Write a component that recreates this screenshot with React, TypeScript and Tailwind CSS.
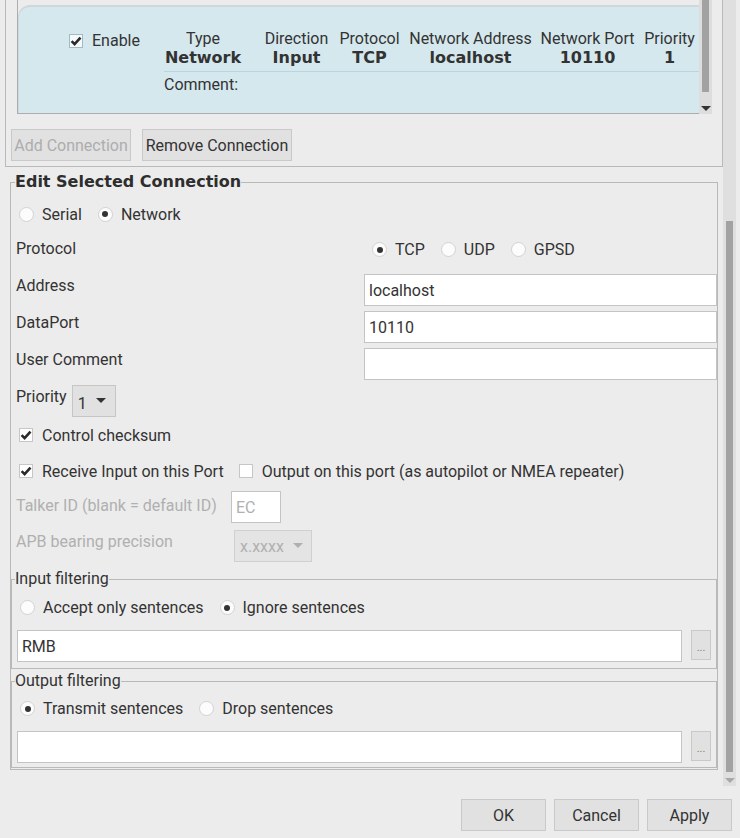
// Verbindungs-Dialog: Liste oben, Editor unten, Buttons am Fuss

const COLUMNS = [
  { head: "Type", val: "Network", w: "w-[94px]" },
  { head: "Direction", val: "Input", w: "w-[93px]" },
  { head: "Protocol", val: "TCP", w: "w-[53px]" },
  { head: "Network Address", val: "localhost", w: "w-[149px]" },
  { head: "Network Port", val: "10110", w: "w-[85px]" },
  { head: "Priority", val: "1", w: "w-[79px]" },
];

function Radio({ checked, label, disabled }: { checked?: boolean; label: string; disabled?: boolean }) {
  return (
    <span className="flex items-center shrink-0">
      <span className="w-[15px] h-[15px] rounded-full border border-[#d2d2d2] bg-[#fcfcfc] flex items-center justify-center">
        {checked && <span className="w-[6px] h-[6px] rounded-full bg-[#333]" />}
      </span>
      <span className={`ml-[8px] ${disabled ? "text-[#b0b0b0]" : ""}`}>{label}</span>
    </span>
  );
}

function Check({ checked, label, tint }: { checked?: boolean; label: string; tint?: boolean }) {
  return (
    <span className="flex items-center shrink-0">
      <span
        className={`w-[14px] h-[14px] border flex items-center justify-center ${
          tint ? "border-[#9fbcc4] bg-[#f4fafb]" : "border-[#c6c6c6] bg-white"
        }`}
      >
        {checked && (
          <svg width="12" height="12" viewBox="0 0 12 12">
            <path d="M1.6 6.2 L4.6 9.2 L10.5 2.6" fill="none" stroke="#2b2b2b" strokeWidth="2.6" />
          </svg>
        )}
      </span>
      <span className="ml-[9px]">{label}</span>
    </span>
  );
}

function TextBox({ value, w, muted }: { value?: string; w: string; muted?: boolean }) {
  return (
    <div
      className={`${w} h-[32px] shrink-0 bg-white border border-[#c4c4c4] flex items-center pl-[4px] ${
        muted ? "text-[#b0b0b0]" : ""
      }`}
    >
      {value}
    </div>
  );
}

function Arrow({ color }: { color: string }) {
  return (
    <svg width="10" height="6" viewBox="0 0 10 6">
      <path d="M0 0 L10 0 L5 5 Z" fill={color} />
    </svg>
  );
}

function Btn({ label, w, disabled }: { label: string; w: string; disabled?: boolean }) {
  return (
    <div
      className={`${w} h-[32px] shrink-0 bg-[#e1e1e1] border border-[#c9c9c9] flex items-center justify-center ${
        disabled ? "text-[#adadad]" : "text-[#333]"
      }`}
    >
      {label}
    </div>
  );
}

function DotsBtn() {
  return (
    <div className="w-[20px] h-[30px] shrink-0 bg-[#e1e1e1] border border-[#c9c9c9] flex items-end justify-center pb-[6px] text-[11px] leading-[11px] text-[#8a7a66]">
      ...
    </div>
  );
}

export default function App() {
  return (
    <div className="w-[740px] h-[838px] bg-[#ececec] overflow-hidden font-['Roboto',sans-serif] text-[16px] leading-[19px] text-[#333]">
      <div className="flex h-[786px]">
        {/* scrollbarer Inhalt */}
        <div className="w-[723px] shrink-0 flex flex-col">
          {/* Verbindungsliste */}
          <div className="ml-[5px] w-[718px] h-[167px] shrink-0 border-x border-b border-[#b9b9b9] flex flex-col">
            <div className="ml-[11px] w-[695px] h-[114px] flex border-l border-[#adadad]">
              <div className="w-[681px] h-[114px] flex flex-col pt-[5px] border-b border-[#adadad]">
                <div className="flex-1 flex bg-[#d5e8ee] border-t-2 border-l border-[#cfd7da] rounded-tl-[12px] overflow-hidden">
                  <div className="w-[137px] shrink-0 pt-[24px] pl-[50px]">
                    <div className="h-[19px] flex items-center">
                      <Check checked tint label="Enable" />
                    </div>
                  </div>
                  <div className="flex flex-col pt-[22px]">
                    <div className="flex">
                      {COLUMNS.map((c) => (
                        <div key={c.head} className={`${c.w} shrink-0 flex flex-col items-center whitespace-nowrap`}>
                          <span>{c.head}</span>
                          <span className="font-['DejaVu_Sans',sans-serif] font-bold">{c.val}</span>
                        </div>
                      ))}
                    </div>
                    <div className="ml-[8px] mt-[4px] h-px bg-[#b7d6e0]" />
                    <div className="ml-[8px] mt-[3px]">Comment:</div>
                  </div>
                </div>
              </div>
              <div className="w-[13px] bg-[#dddddd] flex flex-col items-center">
                <div className="w-[7px] h-[92px] bg-[#a2a2a2]" />
                <div className="mt-[14px]">
                  <Arrow color="#333" />
                </div>
              </div>
            </div>
            <div className="mt-[15px] ml-[5px] flex gap-[11px]">
              <Btn label="Add Connection" w="w-[120px]" disabled />
              <Btn label="Remove Connection" w="w-[150px]" />
            </div>
          </div>

          {/* Editor */}
          <fieldset className="mt-[6px] ml-[10px] w-[708px] border border-[#b9b9b9] pb-px">
            <legend className="ml-[4px] font-['DejaVu_Sans',sans-serif] font-bold leading-[18px] text-[#2e2e2e]">
              Edit Selected Connection
            </legend>

            <div className="h-[46px] flex items-center pl-[8px] gap-[16px]">
              <Radio label="Serial" />
              <Radio checked label="Network" />
            </div>

            <div className="h-[32px] flex">
              <div className="w-[353px] pl-[5px] pt-[2px] shrink-0">Protocol</div>
              <div className="pl-[8px] pt-[6px] flex gap-[16px] h-[19px]">
                <Radio checked label="TCP" />
                <Radio label="UDP" />
                <Radio label="GPSD" />
              </div>
            </div>

            <div className="mt-[5px] h-[32px] flex">
              <div className="w-[353px] pl-[5px] pt-[2px] shrink-0">Address</div>
              <TextBox value="localhost" w="w-[353px]" />
            </div>
            <div className="mt-[5px] h-[32px] flex">
              <div className="w-[353px] pl-[5px] pt-[2px] shrink-0">DataPort</div>
              <TextBox value="10110" w="w-[353px]" />
            </div>
            <div className="mt-[5px] h-[32px] flex">
              <div className="w-[353px] pl-[5px] pt-[2px] shrink-0">User Comment</div>
              <TextBox w="w-[353px]" />
            </div>

            <div className="mt-[5px] h-[32px] flex items-start">
              <div className="pl-[5px] pt-[2px]">Priority</div>
              <div className="ml-[5px] w-[44px] h-[32px] bg-[#e1e1e1] border border-[#c6c6c6] flex items-center pl-[5px] gap-[9px]">
                <span className="pt-[4px]">1</span>
                <Arrow color="#333" />
              </div>
            </div>

            <div className="h-[36px] flex items-center pl-[8px]">
              <Check checked label="Control checksum" />
            </div>
            <div className="h-[36px] flex items-center pl-[8px] gap-[15px]">
              <Check checked label="Receive Input on this Port" />
              <Check label="Output on this port (as autopilot or NMEA repeater)" />
            </div>

            <div className="mt-[2px] h-[32px] flex text-[#b0b0b0]">
              <div className="w-[220px] pl-[5px] pt-[5px] shrink-0">Talker ID (blank = default ID)</div>
              <TextBox value="EC" w="w-[50px]" muted />
            </div>
            <div className="mt-[7px] h-[32px] flex text-[#b0b0b0]">
              <div className="w-[223px] pl-[5px] pt-[2px] shrink-0">APB bearing precision</div>
              <div className="w-[78px] h-[32px] bg-[#e4e4e4] border border-[#d0d0d0] flex items-center pl-[5px] gap-[9px]">
                <span>x.xxxx</span>
                <Arrow color="#b0b0b0" />
              </div>
            </div>

            {/* Eingangsfilter */}
            <fieldset className="mt-[8px] border border-[#b9b9b9] pb-[6px]">
              <legend className="ml-[3px] leading-[18px]">Input filtering</legend>
              <div className="h-[39px] flex items-center pl-[8px] gap-[16px]">
                <Radio label="Accept only sentences" />
                <Radio checked label="Ignore sentences" />
              </div>
              <div className="mt-[3px] flex items-start pl-[5px] gap-[9px]">
                <TextBox value="RMB" w="w-[665px]" />
                <DotsBtn />
              </div>
            </fieldset>

            {/* Ausgangsfilter */}
            <fieldset className="mt-[3px] border border-[#b9b9b9] pb-[4px]">
              <legend className="ml-[3px] leading-[18px]">Output filtering</legend>
              <div className="h-[37px] flex items-center pl-[8px] gap-[16px]">
                <Radio checked label="Transmit sentences" />
                <Radio label="Drop sentences" />
              </div>
              <div className="mt-[4px] flex items-start pl-[5px] gap-[9px]">
                <TextBox w="w-[665px]" />
                <DotsBtn />
              </div>
            </fieldset>
          </fieldset>
        </div>

        {/* aeussere Scrollbar */}
        <div className="w-[13px] shrink-0 bg-[#dfdfdf] flex flex-col items-center">
          <div className="mt-[221px] w-[7px] h-[551px] bg-[#a2a2a2]" />
          <div className="mt-[6px]">
            <Arrow color="#a8a8a8" />
          </div>
        </div>
      </div>

      {/* Dialog-Buttons */}
      <div className="mt-[13px] flex justify-end gap-[8px] pr-[8px]">
        <Btn label="OK" w="w-[85px]" />
        <Btn label="Cancel" w="w-[85px]" />
        <Btn label="Apply" w="w-[85px]" />
      </div>
    </div>
  );
}
